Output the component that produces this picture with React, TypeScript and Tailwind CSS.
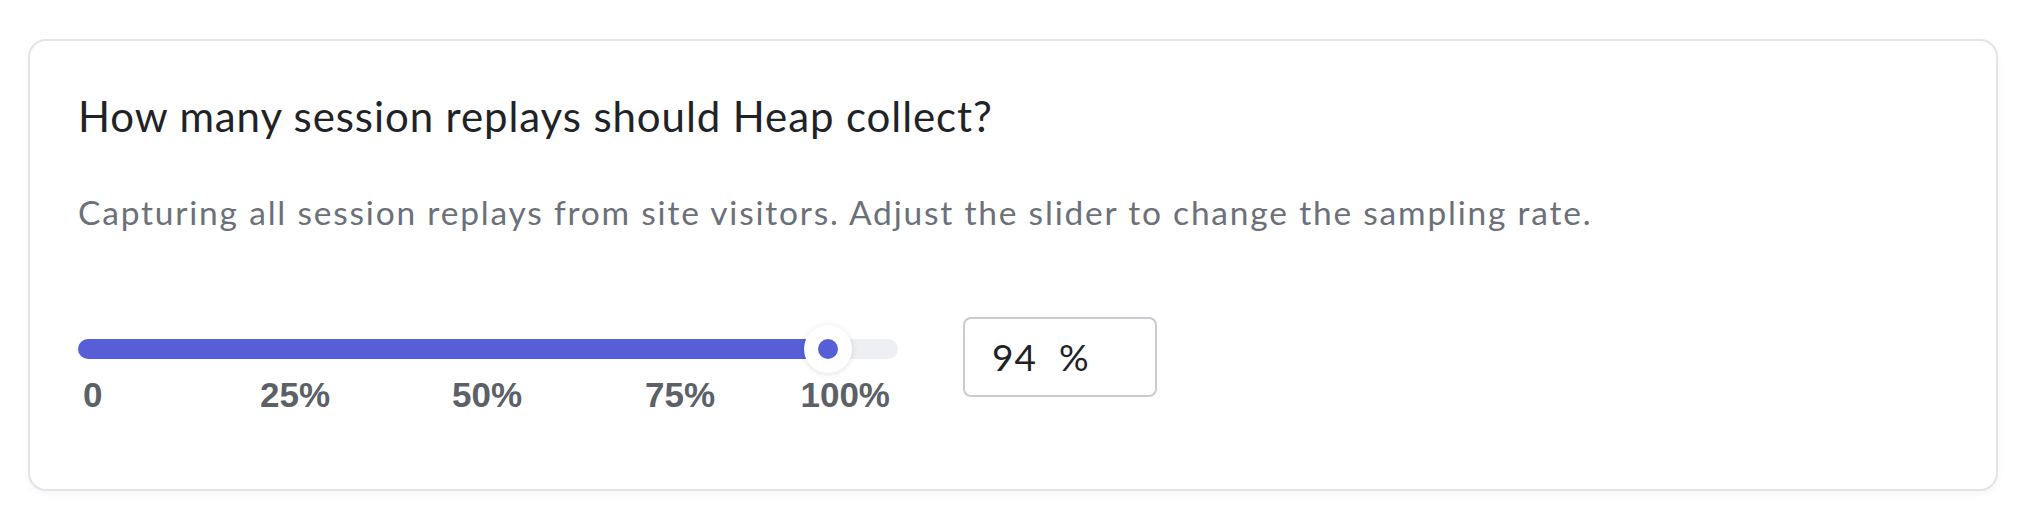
import { useState } from 'react';

const marks = [
  { label: '25%', ml: 'ml-[122px]' },
  { label: '50%', ml: 'ml-[92px]' },
  { label: '75%', ml: 'ml-[93px]' }
];

const TRACK_W = 820;
const THUMB = 48;

const SamplingSlider = ({ value }: { value: number }) => {
  const center = THUMB / 2 + (value / 100) * (TRACK_W - THUMB);
  return (
    <div className="w-[820px] pt-[22px]">
      <div className="relative h-[20px] rounded-full bg-[#eeeff3]">
        <div className="h-full rounded-full bg-[#565fd6]" style={{ width: center }} />
        <div
          className="absolute top-[-14px] flex h-[48px] w-[48px] items-center justify-center rounded-full bg-white shadow-[0_1px_6px_rgba(0,0,0,0.12)]"
          style={{ left: center - THUMB / 2 }}
        >
          <div className="h-[20px] w-[20px] rounded-full bg-[#565fd6]" />
        </div>
      </div>
      <div className="mt-[16px] flex font-['Liberation_Sans',Arial,sans-serif] text-[35px] font-bold leading-[40px] text-[#5c6168]">
        <span className="ml-[5px] w-[40px]">0</span>
        {marks.map((m) => (
          <span key={m.label} className={`${m.ml} w-[100px] text-center`}>
            {m.label}
          </span>
        ))}
        <span className="ml-auto pr-[8px]">100%</span>
      </div>
    </div>
  );
};

export default function App() {
  const [value] = useState(94);
  return (
    <div className="h-[520px] bg-white pl-[28px] pr-[32px] pt-[39px] font-['Lato',sans-serif]">
      <div className="h-[452px] rounded-[18px] border-2 border-[#e1e4e9] bg-white px-12 pt-[51px] shadow-[0_3px_8px_rgba(0,0,0,0.04)]">
        <h2 className="text-[42px] leading-[48px] tracking-[0.9px] text-[#1f2328]">
          How many session replays should Heap collect?
        </h2>
        <p className="mt-[52px] text-[33.5px] leading-[40px] tracking-[1.8px] text-[#6b7079]">
          Capturing all session replays from site visitors. Adjust the slider to change the sampling rate.
        </p>
        <div className="mt-[85px] flex items-start gap-[65px]">
          <SamplingSlider value={value} />
          <div className="flex h-[80px] w-[194px] items-center gap-[22px] rounded-[8px] border-2 border-[#c8ccd2] pl-[27px] text-[37px] tracking-[1px] text-[#1f2328]">
            <span>{value}</span>
            <span>%</span>
          </div>
        </div>
      </div>
    </div>
  );
}
